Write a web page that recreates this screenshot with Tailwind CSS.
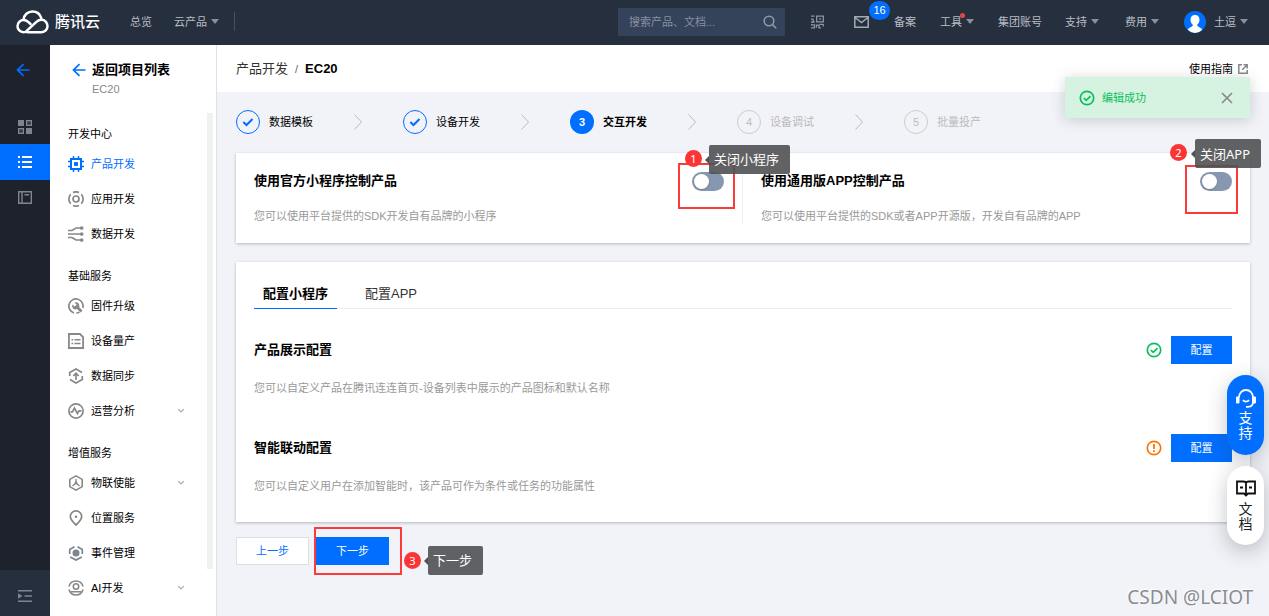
<!DOCTYPE html>
<html lang="zh-CN">
<head>
<meta charset="utf-8">
<meta name="viewport" content="width=device-width, initial-scale=1">
<title>产品开发 - EC20</title>
<script src="https://cdn.jsdelivr.net/npm/@tailwindcss/browser@4"></script>
</head>
<body class="relative flex min-h-screen flex-col bg-[#f2f3f8] font-['Liberation_Sans','Noto_Sans_CJK_SC',sans-serif] text-[11px] leading-4 text-black">

<svg class="hidden">
  <symbol id="caret" viewBox="0 0 8 5"><path d="M0 0h8L4 5z" fill="currentColor"/></symbol>
  <symbol id="back" viewBox="0 0 14 14"><path d="M7.5 1.2 1.5 7l6 5.8M1.5 7H13.5" fill="none" stroke="currentColor" stroke-width="1.7"/></symbol>
  <symbol id="down" viewBox="0 0 8 6"><path d="M1.2 1.2 4 4l2.800-2.800" fill="none" stroke="currentColor" stroke-width="1.2"/></symbol>
  <symbol id="next" viewBox="0 0 8 16"><path d="M.5.5 7.500 8 .5 15.500" fill="none" stroke="currentColor"/></symbol>
  <symbol id="tick" viewBox="0 0 12 10"><path d="m1.300 5 3.200 3L10.500 2" fill="none" stroke="currentColor" stroke-width="2"/></symbol>
  <symbol id="ok" viewBox="0 0 16 16"><circle cx="8" cy="8" r="6.700" fill="none" stroke="currentColor" stroke-width="1.700"/><path d="m4.800 8 2.400 2.300 4.300-4.200" fill="none" stroke="currentColor" stroke-width="1.700"/></symbol>
</svg>

<header class="flex h-[45px] shrink-0 items-center bg-[#262f3e] pb-[2px] pl-4 pr-[21px] text-[#b9bdc4]">
  <a href="#" class="flex items-center gap-[6px] text-[15px] font-medium text-white">
    <svg class="h-6 w-[33px]" viewBox="0 0 33 24" fill="none" stroke="currentColor" stroke-width="2.500" stroke-linecap="round" stroke-linejoin="round"><path d="M7.500 9.600C8 4.900 11.800 1.500 16.400 1.500c4.300 0 7.700 2.700 8.900 6.600"/><path d="M11.300 22.200h14.200c3.400 0 6-2.700 6-6.100 0-3.500-2.700-6.400-6.100-6.400-2 0-3.600.8-5 2.100L9.600 21.900c-.700.3-1.300.3-2.100.3-3.300 0-6-2.700-6-6s2.700-6.200 6-6.200c2 0 3.400.7 4.700 1.900l2.300 2.100"/></svg>
    <span>腾讯云</span>
  </a>
  <nav class="flex items-center">
    <a href="#" class="ml-[30px]">总览</a>
    <a href="#" class="ml-[22px] flex items-center gap-1">云产品<svg class="h-[5px] w-2 text-[#8a8f98]"><use href="#caret"/></svg></a>
    <span class="ml-[15px] h-[19px] w-px bg-[#48505e]"></span>
  </nav>
  <div class="ml-auto flex items-center">
    <label class="flex h-7 w-[167px] items-center bg-[#34425a] pl-[11px] pr-2">
      <input type="text" aria-label="搜索" placeholder="搜索产品、文档..." class="min-w-0 flex-1 bg-transparent outline-none placeholder:text-[#87909e]">
      <svg class="size-[14px] text-[#9299a5]" viewBox="0 0 14 14" fill="none" stroke="currentColor" stroke-width="1.600"><circle cx="6" cy="6" r="4.800"/><path d="m9.500 9.500 3.700 3.700"/></svg>
    </label>
    <button aria-label="小程序码" class="ml-[26px] text-[#8e95a0]"><svg class="block h-[14px] w-[13px]" viewBox="0 0 13 14" fill="none" stroke="currentColor" stroke-width="1.300"><path d="M0 1.200h3.600M0 4.200h2.300M2.300 4.200v3M0 7h3.700M5.700 1.200h6.600v5.600H5.700zM8.200 4h1.700M0 12.800h3.500v-3H.6v-.900M5.500 12.800v-2.600H8v2.600h2M8.500 9.400h3.800M12.300 9v2.400"/></svg></button>
    <a href="#" aria-label="消息" class="relative ml-[30px] text-[#a4a9b2]"><svg class="block h-3 w-[15px]" viewBox="0 0 15 12" fill="none" stroke="currentColor" stroke-width="1.500"><path d="M.8.800h13.400v10.400H.8zM1 1.500l6.500 5 6.500-5"/></svg><span class="absolute -top-[15px] left-[15px] flex h-[19px] w-[21px] items-center justify-center rounded-full bg-[#006eff] text-white">16</span></a>
    <a href="#" class="ml-[25px]">备案</a>
    <a href="#" class="relative ml-6 flex items-center gap-1">工具<svg class="h-[5px] w-2 text-[#8a8f98]"><use href="#caret"/></svg><span class="absolute -top-[1px] left-5 size-[5px] rounded-full bg-[#e54545]"></span></a>
    <a href="#" class="ml-6">集团账号</a>
    <a href="#" class="ml-[23px] flex items-center gap-1">支持<svg class="h-[5px] w-2 text-[#8a8f98]"><use href="#caret"/></svg></a>
    <a href="#" class="ml-[26px] flex items-center gap-1">费用<svg class="h-[5px] w-2 text-[#8a8f98]"><use href="#caret"/></svg></a>
    <a href="#" class="ml-[25px] flex items-center"><svg class="mr-2 size-[22px]" viewBox="0 0 22 22"><circle cx="11" cy="11" r="11" fill="#006eff"/><path d="M11 4c-2.900 0-4.500 2-4.500 4.700 0 2 .8 3.800 2.200 4.800v1.300c0 .8-3.600 1.600-4.900 3.900A11 11 0 0 0 11 22a11 11 0 0 0 7.200-3.300c-1.300-2.300-4.900-3.100-4.900-3.900v-1.300c1.400-1 2.200-2.800 2.200-4.800C15.500 6 13.900 4 11 4z" fill="#fff"/></svg>土逗<svg class="ml-1 h-[5px] w-2 text-[#8a8f98]"><use href="#caret"/></svg></a>
  </div>
</header>

<div class="flex flex-1">
  <nav aria-label="主导航" class="flex w-[50px] shrink-0 flex-col bg-[#1e222d] text-[#7f858e]">
    <a href="#" aria-label="返回" class="flex h-[50px] items-center pl-4 text-[#006eff]"><svg class="size-[14px]"><use href="#back"/></svg></a>
    <a href="#" aria-label="概览" class="mt-[14px] flex h-[35px] items-center justify-center"><svg class="h-[14px] w-[14px]" viewBox="0 0 14 14" fill="currentColor"><path d="M0 0h6v6H0zM8 8h6v6H8z"/><path d="M8.700.700h4.600v4.600H8.700zM.7 8.700h4.600v4.600H.7z" fill="none" stroke="currentColor" stroke-width="1.400"/><path d="M10.500 2.500h1v1h-1zM2.500 10.500h1v1h-1z"/></svg></a>
    <a href="#" aria-label="项目" class="flex h-9 items-center justify-center bg-[#006eff] text-white"><svg class="h-3 w-[14px]" viewBox="0 0 14 12" fill="currentColor"><path d="M0 0h2v2H0zM4 0h10v2H4zM0 5h2v2H0zM4 5h10v2H4zM0 10h2v2H0zM4 10h10v2H4z"/></svg></a>
    <a href="#" aria-label="文档" class="flex h-[35px] items-center justify-center"><svg class="h-[13px] w-[14px]" viewBox="0 0 14 13" fill="none" stroke="currentColor" stroke-width="1.400"><path d="M.7.700h12.600v11.600H.7zM4 .7v11.600M6.500 3.700h4.500"/></svg></a>
    <button aria-label="展开菜单" class="mt-auto flex h-[46px] items-center justify-center bg-[#252f3e]"><svg class="mt-[6px] h-3 w-[14px]" viewBox="0 0 14 12"><path d="M0 .7h14M6.500 6H14M0 11.300h14" stroke="currentColor" stroke-width="1.400"/><path d="M0 3.300 4.500 6 0 8.700z" fill="currentColor"/></svg></button>
  </nav>

  <aside class="flex w-[167px] shrink-0 flex-col border-r border-[#dde1e8] bg-white">
    <div class="pl-[22px] pt-[17px]">
      <a href="#" class="flex items-center gap-[6px] text-[13px] font-bold"><svg class="size-[14px] text-[#006eff]"><use href="#back"/></svg>返回项目列表</a>
      <p class="pl-5 pt-[3px] text-[#888]">EC20</p>
    </div>
    <div class="mt-4 flex flex-1">
      <div class="flex flex-1 flex-col gap-3 pb-[11px] pl-[18px] pt-2">
        <section>
          <h2 class="flex h-[25px] items-center">开发中心</h2>
          <a href="#" class="flex h-[35px] items-center gap-[7px] text-[#006eff]"><svg class="size-4" viewBox="0 0 16 16" fill="none" stroke="currentColor"><path d="M3 3h10v10H3z" stroke-width="2"/><path d="M5.500 0v3M10.500 0v3M5.500 13v3M10.500 13v3M0 5.500h3M0 10.500h3M13 5.500h3M13 10.500h3" stroke-width="1.500"/><path d="M6.500 6.500h3v3h-3z" fill="currentColor"/></svg>产品开发</a>
          <a href="#" class="flex h-[35px] items-center gap-[7px]"><svg class="size-4 text-[#888]" viewBox="0 0 16 16" fill="none" stroke="currentColor" stroke-width="1.700"><circle cx="8" cy="8" r="3"/><path d="M5 1.500a7.200 7.200 0 0 1 6 0M5 14.500a7.200 7.200 0 0 0 6 0M2.700 3.300a7 7 0 0 0 0 9.400M13.300 3.300a7 7 0 0 1 0 9.400"/></svg>应用开发</a>
          <a href="#" class="flex h-[35px] items-center gap-[7px]"><svg class="size-4 text-[#888]" viewBox="0 0 16 16" fill="none" stroke="currentColor" stroke-width="1.700"><path d="M0 4.500h4l4-2.500h5M0 8h13M0 11.500h4L8 14h5"/><circle cx="13.700" cy="2" r="1" fill="currentColor"/><circle cx="13.700" cy="8" r="1" fill="currentColor"/><circle cx="13.700" cy="14" r="1" fill="currentColor"/></svg>数据开发</a>
        </section>
        <section>
          <h2 class="flex h-[25px] items-center">基础服务</h2>
          <a href="#" class="flex h-[35px] items-center gap-[7px]"><svg class="size-4 text-[#888]" viewBox="0 0 16 16" fill="none" stroke="currentColor" stroke-width="1.700"><path d="M6 14.900A7.100 7.100 0 1 1 14.800 10M8.500 15.100a7 7 0 0 0 3-1"/><path d="m8.500 8.500 5 5" stroke-width="2.800"/><path d="M7.300 4.200a3.600 3.600 0 1 1-3.100 4.300c-.1-.7 0-1.400.3-2l2.200 2.100 2-1.900L6.500 4.500z" fill="currentColor" stroke="none"/></svg>固件升级</a>
          <a href="#" class="flex h-[35px] items-center gap-[7px]"><svg class="size-4 text-[#888]" viewBox="0 0 16 16" fill="none" stroke="currentColor" stroke-width="1.800"><path d="M.9 1h11l3.200 3.200V15H.9z"/><path d="M3.500 6.800h1.700M6.500 6.800h6M3.500 10.500h1.700M6.500 10.500h6" stroke-width="1.500"/></svg>设备量产</a>
          <a href="#" class="flex h-[35px] items-center gap-[7px]"><svg class="size-4 text-[#888]" viewBox="0 0 16 16" fill="none" stroke="currentColor" stroke-width="1.700"><path d="M1.700 6V4.500L8 1l6 3.400M14.300 10v1.500L8 15l-6-3.400M1.700 6v2M14.300 8v2"/><path d="M8 12V6M5.300 8 8 5.300 10.700 8"/></svg>数据同步</a>
          <a href="#" class="flex h-[35px] items-center gap-[7px]"><svg class="size-4 text-[#888]" viewBox="0 0 16 16" fill="none" stroke="currentColor" stroke-width="1.700"><circle cx="8" cy="8" r="7.100"/><path d="M2.500 8.800h2L6.400 5l3 5.500L11 7.800h2.500"/></svg>运营分析<svg class="ml-auto mr-[22px] h-[6px] w-2 text-[#aaa]"><use href="#down"/></svg></a>
        </section>
        <section>
          <h2 class="flex h-[25px] items-center">增值服务</h2>
          <a href="#" class="flex h-[35px] items-center gap-[7px]"><svg class="size-4 text-[#888]" viewBox="0 0 16 16" fill="none" stroke="currentColor" stroke-width="1.600"><path d="m8 .9 6.200 3.500v7.200L8 15.100l-6.200-3.500V4.400z"/><path d="M8 4v4.500M8 8l-3.500 3M8 8l3.500 3" stroke-width="1.400"/><circle cx="8" cy="8" r="1.400" fill="currentColor" stroke="none"/></svg>物联使能<svg class="ml-auto mr-[22px] h-[6px] w-2 text-[#aaa]"><use href="#down"/></svg></a>
          <a href="#" class="flex h-[35px] items-center gap-[7px]"><svg class="size-4 text-[#888]" viewBox="0 0 16 16" fill="none" stroke="currentColor" stroke-width="1.700"><path d="M8 15C4.500 11.800 2.300 9.500 2.300 6.600a5.700 5.700 0 0 1 11.400 0C13.700 9.500 11.500 11.800 8 15z"/><circle cx="8" cy="6.800" r="1.300" fill="currentColor" stroke="none"/></svg>位置服务</a>
          <a href="#" class="flex h-[35px] items-center gap-[7px]"><svg class="size-4 text-[#7d858e]" viewBox="0 0 16 16" fill="none" stroke="currentColor" stroke-width="1.700"><path d="M6.500 1.700 1.700 4.400V9M9.500 1.700l4.800 2.700V9M2.300 12 8 15.100l5.700-3.100"/><circle cx="8" cy="8" r="3.500" fill="currentColor" stroke="none"/></svg>事件管理</a>
          <a href="#" class="flex h-[35px] items-center gap-[7px]"><svg class="size-4 text-[#888]" viewBox="0 0 16 16" fill="none" stroke="currentColor" stroke-width="1.600"><circle cx="8" cy="6.500" r="2.700"/><path d="M1 6.500a7.200 7.200 0 0 1 14 0M1 9.500a7.200 7.200 0 0 0 14 0M3 11.800h10"/></svg>AI开发<svg class="ml-auto mr-[22px] h-[6px] w-2 text-[#aaa]"><use href="#down"/></svg></a>
        </section>
      </div>
      <div class="mb-[47px] mr-[3px] w-[6px] bg-[#f0f0f0]"></div>
    </div>
  </aside>

  <div class="flex min-w-0 flex-1 flex-col">
    <div class="flex h-[47px] items-center justify-between bg-white px-[19px]">
      <nav aria-label="面包屑" class="flex items-center gap-[7px] text-[13px]"><a href="#" class="text-[#333]">产品开发</a><span class="text-[11px] text-[#666]">/</span><span class="font-bold">EC20</span></nav>
      <a href="#" class="flex items-center gap-[5px] pr-[2px]">使用指南<svg class="size-[10px] text-[#888]" viewBox="0 0 10 10" fill="none" stroke="currentColor" stroke-width="1.500"><path d="M4 .8H.8v8.400h8.400V6M5.500.800h3.700v3.700M9 1 4.300 5.700"/></svg></a>
    </div>

    <main class="px-[19px] pb-10 pt-[18px]">
      <ol class="flex h-6 items-center text-[#bbb]">
        <li class="flex w-[167px] items-center text-black"><span class="mr-[9px] flex size-6 items-center justify-center rounded-full border border-[#006eff] text-[#006eff]"><svg class="h-[10px] w-3"><use href="#tick"/></svg></span>数据模板<svg class="ml-[41px] h-4 w-2 text-[#bbb]"><use href="#next"/></svg></li>
        <li class="flex w-[167px] items-center text-black"><span class="mr-[9px] flex size-6 items-center justify-center rounded-full border border-[#006eff] text-[#006eff]"><svg class="h-[10px] w-3"><use href="#tick"/></svg></span>设备开发<svg class="ml-[41px] h-4 w-2 text-[#bbb]"><use href="#next"/></svg></li>
        <li aria-current="step" class="flex w-[167px] items-center font-bold text-black"><span class="mr-[9px] flex size-6 items-center justify-center rounded-full bg-[#006eff] text-white">3</span>交互开发<svg class="ml-[41px] h-4 w-2 text-[#bbb]"><use href="#next"/></svg></li>
        <li class="flex w-[167px] items-center"><span class="mr-[9px] flex size-6 items-center justify-center rounded-full border border-[#ccc]">4</span>设备调试<svg class="ml-[41px] h-4 w-2"><use href="#next"/></svg></li>
        <li class="flex items-center"><span class="mr-[9px] flex size-6 items-center justify-center rounded-full border border-[#ccc]">5</span>批量投产</li>
      </ol>

      <section class="mt-[19px] grid grid-cols-2 bg-white px-[18px] py-[19px] shadow-[0_1px_3px_rgba(54,58,80,0.32)]">
        <div class="flex items-start justify-between border-r border-[#eee] pr-[18px]">
          <div><h2 class="text-[13px] leading-[18px] font-bold"><label for="mini">使用官方小程序控制产品</label></h2><p class="pt-[18px] text-[#999]">您可以使用平台提供的SDK开发自有品牌的小程序</p></div>
          <div class="relative">
            <input id="mini" type="checkbox" role="switch" class="block h-[19px] w-8 appearance-none rounded-full bg-[#8797af] p-[2px] before:block before:size-[15px] before:rounded-full before:bg-white before:shadow-sm">
            <span class="absolute -left-[14px] -top-[9px] h-[46px] w-[57px] border-2 border-[#fb3b3b]"></span>
            <span class="absolute -left-[7px] -top-[22px] flex size-[17px] items-center justify-center rounded-full bg-[#fb3535] font-['Noto_Sans'] text-white">1</span>
            <span class="absolute -top-[27px] left-[17px] flex h-[29px] items-center whitespace-nowrap rounded-xs bg-[#505153]/90 pl-[5px] pr-[11px] text-[13px] text-white before:absolute before:-left-1 before:border-y-4 before:border-r-4 before:border-y-transparent before:border-r-[#505153]">关闭小程序</span>
          </div>
        </div>
        <div class="flex items-start justify-between pl-[18px]">
          <div><h2 class="text-[13px] leading-[18px] font-bold"><label for="app">使用通用版APP控制产品</label></h2><p class="pt-[18px] text-[#999]">您可以使用平台提供的SDK或者APP开源版，开发自有品牌的APP</p></div>
          <div class="relative">
            <input id="app" type="checkbox" role="switch" class="block h-[19px] w-8 appearance-none rounded-full bg-[#8797af] p-[2px] before:block before:size-[15px] before:rounded-full before:bg-white before:shadow-sm">
            <span class="absolute -left-[15px] -top-[7px] h-[49px] w-[53px] border-2 border-[#fb3b3b]"></span>
            <span class="absolute -left-[30px] -top-[28px] flex size-[17px] items-center justify-center rounded-full bg-[#fb3535] font-['Noto_Sans'] text-white">2</span>
            <span class="absolute -left-[5px] -top-[33px] flex h-[29px] items-center whitespace-nowrap rounded-xs bg-[#505153]/90 pl-[5px] pr-[11px] font-['Noto_Sans','Noto_Sans_CJK_SC',sans-serif] text-[13px] text-white before:absolute before:-left-1 before:border-y-4 before:border-r-4 before:border-y-transparent before:border-r-[#505153]">关闭APP</span>
          </div>
        </div>
      </section>

      <section class="mt-[19px] bg-white px-[18px] pb-7 pt-[18px] shadow-[0_1px_3px_rgba(54,58,80,0.32)]">
        <div role="tablist" class="flex border-b border-[#eee] text-[13px]">
          <button role="tab" aria-selected="true" class="-mb-px h-[29px] border-b border-[#006eff] px-[9px] font-bold">配置小程序</button>
          <button role="tab" aria-selected="false" class="ml-[19px] h-7 px-[9px] text-[#333]">配置APP</button>
        </div>
        <div class="mt-[27px] flex h-7 items-center"><h3 class="text-[13px] font-bold">产品展示配置</h3><svg class="ml-auto size-4 text-[#0abf5b]"><use href="#ok"/></svg><button class="ml-[9px] h-7 w-[61px] bg-[#006eff] text-white">配置</button></div>
        <p class="mt-4 text-[#999]">您可以自定义产品在腾讯连连首页-设备列表中展示的产品图标和默认名称</p>
        <div class="mt-[38px] flex h-7 items-center"><h3 class="text-[13px] font-bold">智能联动配置</h3><svg class="ml-auto size-4 text-[#ff7200]" viewBox="0 0 16 16"><circle cx="8" cy="8" r="6.700" fill="none" stroke="currentColor" stroke-width="1.700"/><path d="M8 4v5M8 10.300V12" stroke="currentColor" stroke-width="1.800"/></svg><button class="ml-[9px] h-7 w-[61px] bg-[#006eff] text-white">配置</button></div>
        <p class="mt-4 text-[#999]">您可以自定义用户在添加智能时，该产品可作为条件或任务的功能属性</p>
      </section>

      <div class="mt-[15px] flex gap-[7px]">
        <button class="h-7 w-[73px] border border-[#dcdfe6] bg-white text-[#006eff]">上一步</button>
        <div class="relative">
          <button class="h-7 w-[73px] bg-[#006eff] text-white">下一步</button>
          <span class="absolute -left-[2px] -top-[10px] h-12 w-[88px] border-2 border-[#fb3b3b]"></span>
          <span class="absolute left-[88px] top-[15px] flex size-[17px] items-center justify-center rounded-full bg-[#fb3535] font-['Noto_Sans'] text-white">3</span>
          <span class="absolute left-[112px] top-[9px] flex h-[29px] items-center whitespace-nowrap rounded-xs bg-[#505153]/90 pl-[5px] pr-[11px] text-[13px] text-white before:absolute before:-left-1 before:border-y-4 before:border-r-4 before:border-y-transparent before:border-r-[#505153]">下一步</span>
        </div>
      </div>
    </main>
  </div>
</div>

<div role="status" class="absolute right-[19px] top-[77px] flex h-[41px] w-[185px] items-center bg-[#d6f3e2] pl-[14px] pr-[17px] text-[#0abf5b] shadow-[0_2px_14px_rgba(54,58,80,0.22)]">
  <svg class="mr-[7px] size-4"><use href="#ok"/></svg>编辑成功
  <button aria-label="关闭" class="ml-auto text-[#888]"><svg class="block size-3" viewBox="0 0 12 12" stroke="currentColor" stroke-width="1.700"><path d="m1 1 10 10M11 1 1 11"/></svg></button>
</div>

<div class="absolute right-[5px] top-[375px] flex w-[37px] flex-col gap-[11px] text-[14px] leading-[15px]">
  <button class="flex h-20 flex-col items-center rounded-full bg-[#006eff] pt-[14px] text-white shadow-[0_6px_20px_rgba(54,58,80,0.3)]"><svg class="mb-[3px] h-[19px] w-5" viewBox="0 0 20 19" fill="none" stroke="currentColor" stroke-width="1.800"><path d="M3 8.500C3 4 6 1 10 1s7 3 7 7.500V13c0 3-2 4.800-5 4.800h-2"/><path d="M7 11c1.500 2.200 4.500 2.200 6 0"/><path d="M.5 8H3v6H.5zM17 8h2.500v6H17z" fill="currentColor" stroke-width="1"/></svg><span>支</span><span>持</span></button>
  <button class="flex h-[79px] flex-col items-center rounded-full bg-white pt-[14px] text-[#222] shadow-[0_6px_20px_rgba(54,58,80,0.3)]"><svg class="mb-[5px] h-[17px] w-5" viewBox="0 0 20 17" fill="none" stroke="#111" stroke-width="1.800"><path d="M1 1.500h6.500c1.500 0 2.500.8 2.500 2 0-1.200 1-2 2.500-2H19v12h-7L10 15.500 8 13.500H1zM10 3.500v12M4 7.500h3M13 7.500h3"/></svg><span>文</span><span>档</span></button>
</div>

<p class="absolute bottom-[5px] right-4 font-['Noto_Sans'] text-[19px] leading-7 text-[#8b8c90] [text-shadow:-1px_-1px_0_#fff]">CSDN @LCIOT</p>
</body>
</html>
